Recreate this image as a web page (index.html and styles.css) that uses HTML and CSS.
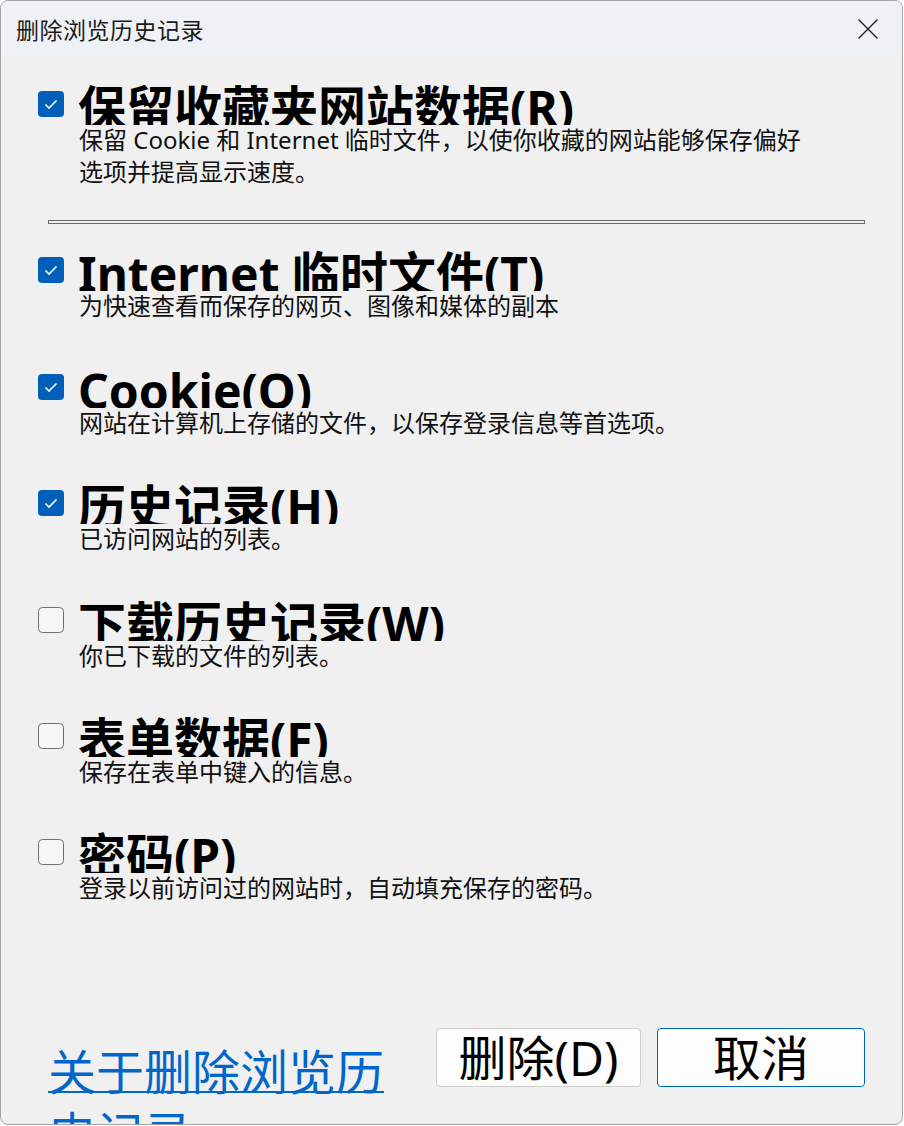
FILE: index.html
```html
<!DOCTYPE html>
<html>
<head>
    <title>删除浏览历史记录</title>
    <link rel="stylesheet" href="styles.css">
</head>
<body>
    <div class="window">
        <div class="titlebar">
            <span class="title">删除浏览历史记录</span>
            <svg class="close" width="20" height="20" viewBox="0 0 20 20">
                <path d="M0.5 0.5 L19.5 19.5 M19.5 0.5 L0.5 19.5" stroke="#1a1a1a" stroke-width="1.3" fill="none"/>
            </svg>
        </div>

        <div class="content">
            <div class="option">
                <div class="option-head">
                    <svg class="check" width="26" height="26" viewBox="0 0 26 26"><rect width="26" height="26" rx="4" fill="#005fb8"/><path d="M7.5 13.5 L11 17 L18.5 9.5" stroke="#fff" stroke-width="1.6" fill="none"/></svg>
                    <span class="option-title">保留收藏夹网站数据(R)</span>
                </div>
                <div class="option-desc">保留 Cookie 和 Internet 临时文件，以使你收藏的网站能够保存偏好选项并提高显示速度。</div>
            </div>

            <div class="separator"></div>

            <div class="option">
                <div class="option-head">
                    <svg class="check" width="26" height="26" viewBox="0 0 26 26"><rect width="26" height="26" rx="4" fill="#005fb8"/><path d="M7.5 13.5 L11 17 L18.5 9.5" stroke="#fff" stroke-width="1.6" fill="none"/></svg>
                    <span class="option-title">Internet 临时文件(T)</span>
                </div>
                <div class="option-desc">为快速查看而保存的网页、图像和媒体的副本</div>
            </div>

            <div class="option">
                <div class="option-head">
                    <svg class="check" width="26" height="26" viewBox="0 0 26 26"><rect width="26" height="26" rx="4" fill="#005fb8"/><path d="M7.5 13.5 L11 17 L18.5 9.5" stroke="#fff" stroke-width="1.6" fill="none"/></svg>
                    <span class="option-title">Cookie(O)</span>
                </div>
                <div class="option-desc">网站在计算机上存储的文件，以保存登录信息等首选项。</div>
            </div>

            <div class="option">
                <div class="option-head">
                    <svg class="check" width="26" height="26" viewBox="0 0 26 26"><rect width="26" height="26" rx="4" fill="#005fb8"/><path d="M7.5 13.5 L11 17 L18.5 9.5" stroke="#fff" stroke-width="1.6" fill="none"/></svg>
                    <span class="option-title">历史记录(H)</span>
                </div>
                <div class="option-desc">已访问网站的列表。</div>
            </div>

            <div class="option">
                <div class="option-head">
                    <svg class="check" width="26" height="26" viewBox="0 0 26 26"><rect x="0.5" y="0.5" width="25" height="25" rx="4" fill="#f6f6f6" stroke="#6e6e6e"/></svg>
                    <span class="option-title">下载历史记录(W)</span>
                </div>
                <div class="option-desc">你已下载的文件的列表。</div>
            </div>

            <div class="option">
                <div class="option-head">
                    <svg class="check" width="26" height="26" viewBox="0 0 26 26"><rect x="0.5" y="0.5" width="25" height="25" rx="4" fill="#f6f6f6" stroke="#6e6e6e"/></svg>
                    <span class="option-title">表单数据(F)</span>
                </div>
                <div class="option-desc">保存在表单中键入的信息。</div>
            </div>

            <div class="option">
                <div class="option-head">
                    <svg class="check" width="26" height="26" viewBox="0 0 26 26"><rect x="0.5" y="0.5" width="25" height="25" rx="4" fill="#f6f6f6" stroke="#6e6e6e"/></svg>
                    <span class="option-title">密码(P)</span>
                </div>
                <div class="option-desc">登录以前访问过的网站时，自动填充保存的密码。</div>
            </div>

            <div class="footer">
                <a class="about-link" href="#">关于删除浏览历史记录</a>
                <div class="buttons">
                    <button class="btn">删除(D)</button>
                    <button class="btn btn-default">取消</button>
                </div>
            </div>
        </div>
    </div>
</body>
</html>
```

FILE: styles.css
```css
body {
    margin: 0;
    background: #ffffff;
    font-family: "Noto Sans", "Noto Sans CJK SC", sans-serif;
    color: #000;
}
.window {
    width: 903px;
    height: 1125px;
    border: 1px solid #a3a3a3;
    border-radius: 8px;
    background: #f0f0f0;
    overflow: hidden;
    box-sizing: border-box;
}
.titlebar {
    height: 56px;
    background: #eef2f6;
    display: flex;
    align-items: center;
    justify-content: space-between;
    padding: 0 24px 0 15px;
}
.title {
    font-family: "Noto Sans CJK SC", sans-serif;
    font-size: 23px;
    color: #1a1a1a;
    letter-spacing: 0.5px;
}
.content {
    padding: 26px 37px 0 37px;
}
.option {
    margin-bottom: 43.4px;
}
.option-head {
    display: flex;
    align-items: center;
    gap: 14px;
    height: 42px;
    overflow: hidden;
}
.check {
    flex: none;
    display: block;
}
.option-title {
    align-self: flex-start;
    font-size: 48px;
    font-weight: bold;
    line-height: 50px;
    white-space: nowrap;
}
.option-desc {
    font-size: 24px;
    line-height: 32px;
    margin-left: 41px;
    margin-top: -1px;
    color: #111;
    max-width: 735px;
}
.separator {
    height: 2px;
    border: 1px solid #6b6b6b;
    background: #f0f0f0;
    margin: -11px 0 25px 10px;
}
.footer {
    display: flex;
    justify-content: space-between;
    align-items: flex-start;
    margin-top: 124px;
    padding-left: 10px;
}
.about-link {
    width: 350px;
    margin-top: 10px;
    font-family: "Noto Sans CJK SC", sans-serif;
    font-size: 48px;
    line-height: 62px;
    color: #0066cc;
    text-decoration: underline;
    text-decoration-thickness: 2px;
}
.buttons {
    display: flex;
    gap: 16px;
}
.btn {
    height: 59px;
    width: 205px;
    background: #fdfdfd;
    border: 1px solid #cfcfcf;
    border-radius: 4px;
    font-family: "Noto Sans", "Noto Sans CJK SC", sans-serif;
    font-size: 48px;
    line-height: 57px;
    padding: 0;
    color: #000;
}
.btn-default {
    width: 208px;
    border-color: #0067c0;
}
```
